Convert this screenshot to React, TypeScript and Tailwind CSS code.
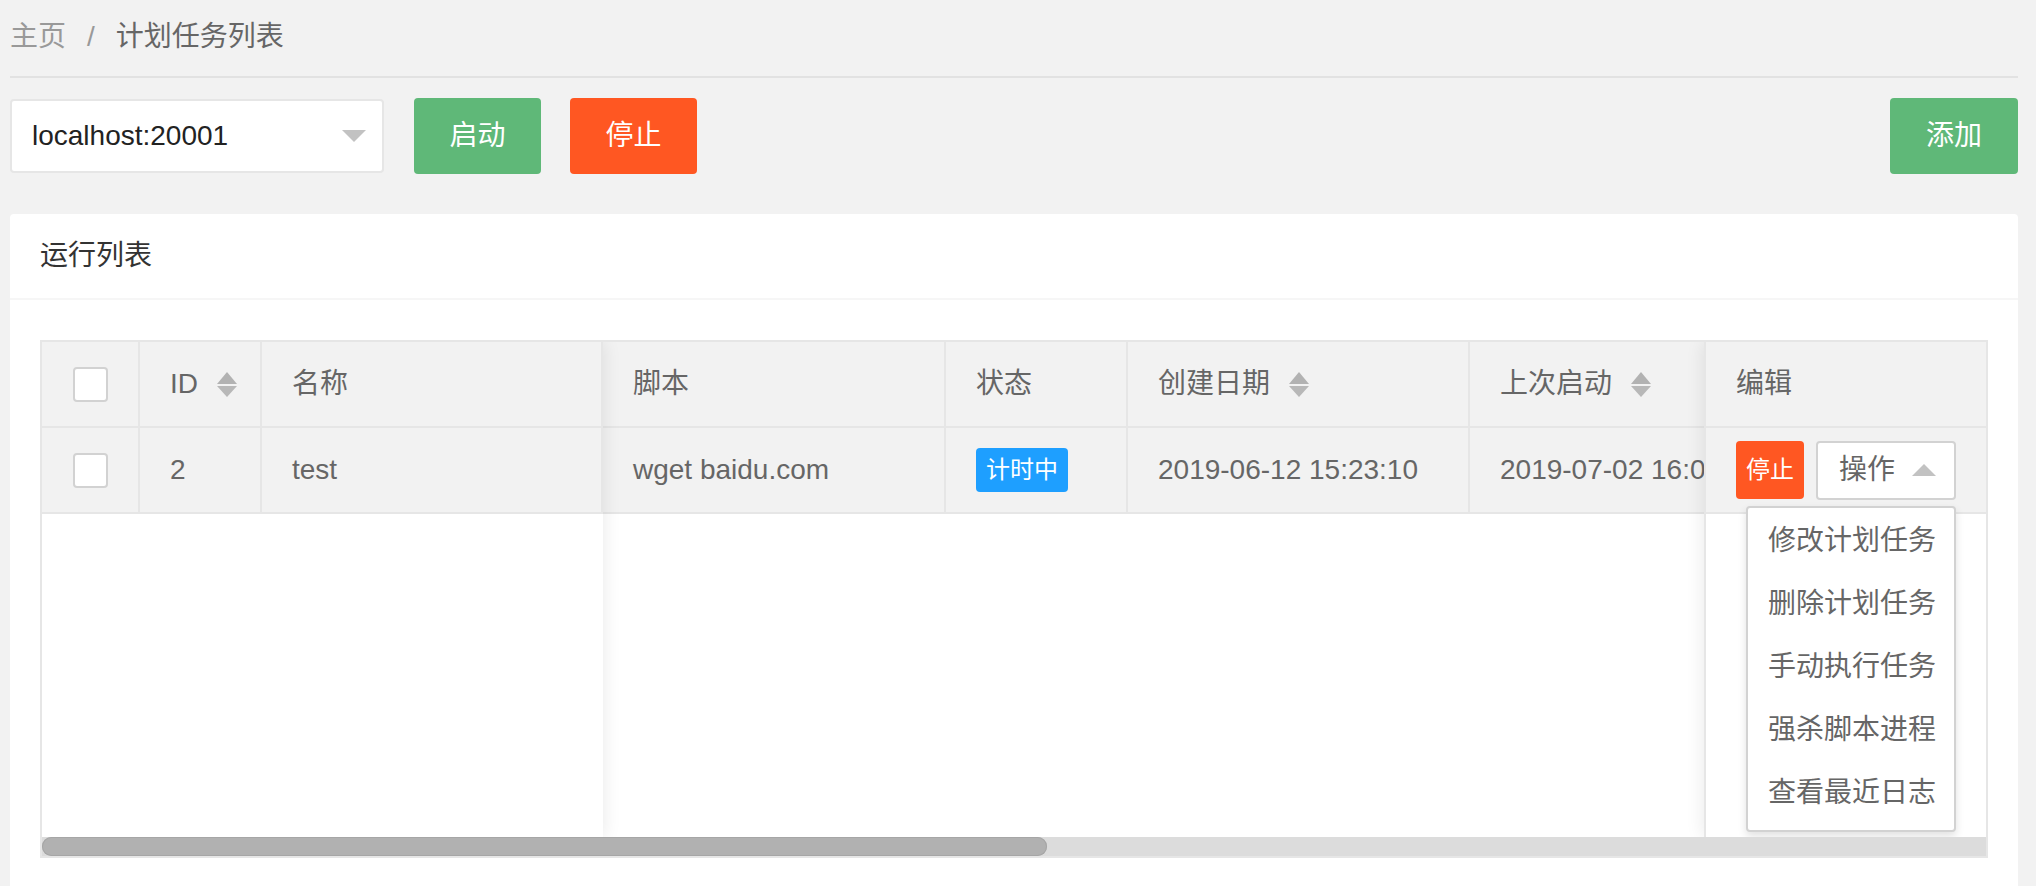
import { ReactNode } from "react";

// triangulos de ordenacao do cabecalho
const SortIcon = () => (
  <span className="ml-[19px] flex flex-col items-center gap-[2px]">
    <span className="h-0 w-0 border-x-[10px] border-b-[12px] border-x-transparent border-b-[#b2b2b2]" />
    <span className="h-0 w-0 border-x-[10px] border-t-[11px] border-x-transparent border-t-[#b8b8b8]" />
  </span>
);

const CheckBox = () => (
  <span className="block h-[35px] w-[35px] rounded-[4px] border-2 border-[#d2d2d2] bg-white" />
);

type CellProps = {
  w: string;
  children?: ReactNode;
  center?: boolean;
};

const Cell = ({ w, children, center }: CellProps) => (
  <div
    className={`flex h-full shrink-0 items-center border-r-2 border-[#e6e6e6] ${w} ${
      center ? "justify-center" : "px-[30px]"
    }`}
  >
    {children}
  </div>
);

const menu = ["修改计划任务", "删除计划任务", "手动执行任务", "强杀脚本进程", "查看最近日志"];

export default function App() {
  return (
    <div className="h-screen overflow-hidden bg-[#f2f2f2] pl-[10px] pr-[18px] font-['Liberation_Sans','Noto_Sans_CJK_SC',sans-serif] text-[28px]">
      {/* breadcrumb */}
      <div className="flex h-[76px] items-center pb-[3px]">
        <span className="text-[#999]">主页</span>
        <span className="mx-[21px] text-[#999]">/</span>
        <span className="text-[#666]">计划任务列表</span>
      </div>
      <div className="h-[2px] bg-[#e2e2e2]" />

      {/* toolbar */}
      <div className="mt-[20px] flex h-[76px] items-center">
        <div className="flex h-[74px] w-[374px] items-center justify-between rounded-[4px] border-2 border-[#e6e6e6] bg-white pl-[20px] pr-[16px] text-[#222]">
          <span>localhost:20001</span>
          <span className="h-0 w-0 border-x-[12px] border-t-[12px] border-x-transparent border-t-[#c2c2c2]" />
        </div>
        <button className="ml-[30px] h-[76px] w-[127px] rounded-[4px] bg-[#5FB878] text-white">启动</button>
        <button className="ml-[29px] h-[76px] w-[127px] rounded-[4px] bg-[#FF5722] text-white">停止</button>
        <button className="ml-auto h-[76px] w-[128px] rounded-[4px] bg-[#5FB878] text-white">添加</button>
      </div>

      {/* card */}
      <div className="mt-[40px] rounded-[4px] bg-white">
        <div className="flex h-[86px] items-center border-b-2 border-[#f6f6f6] px-[30px] text-[#333]">运行列表</div>
        <div className="px-[30px] pb-[40px] pt-[40px]">
          <div className="border-2 border-[#e6e6e6] text-[#666]">
            <div className="flex h-[495px] overflow-hidden">
              {/* colunas fixas a esquerda */}
              <div className="relative z-10 flex w-[561px] shrink-0 flex-col bg-white shadow-[2px_0_16px_rgba(0,0,0,0.08)]">
                <div className="flex h-[86px] border-b-2 border-[#e6e6e6] bg-[#f2f2f2]">
                  <Cell w="w-[98px]" center>
                    <CheckBox />
                  </Cell>
                  <Cell w="w-[122px]">
                    ID
                    <SortIcon />
                  </Cell>
                  <Cell w="w-[341px]">名称</Cell>
                </div>
                <div className="flex h-[86px] border-b-2 border-[#e6e6e6] bg-[#f2f2f2]">
                  <Cell w="w-[98px]" center>
                    <CheckBox />
                  </Cell>
                  <Cell w="w-[122px]">2</Cell>
                  <Cell w="w-[341px]">test</Cell>
                </div>
              </div>

              {/* area rolavel */}
              <div className="flex min-w-0 flex-1 flex-col overflow-hidden bg-white">
                <div className="flex h-[86px] w-max border-b-2 border-[#e6e6e6] bg-[#f2f2f2]">
                  <Cell w="w-[343px]">脚本</Cell>
                  <Cell w="w-[182px]">状态</Cell>
                  <Cell w="w-[342px]">
                    创建日期
                    <SortIcon />
                  </Cell>
                  <Cell w="w-[342px]">
                    上次启动
                    <SortIcon />
                  </Cell>
                </div>
                <div className="flex h-[86px] w-max border-b-2 border-[#e6e6e6] bg-[#f2f2f2]">
                  <Cell w="w-[343px]">wget baidu.com</Cell>
                  <Cell w="w-[182px]">
                    <span className="flex h-[44px] items-center rounded-[4px] bg-[#1E9FFF] px-[10px] text-[24px] text-white">
                      计时中
                    </span>
                  </Cell>
                  <Cell w="w-[342px]">2019-06-12 15:23:10</Cell>
                  <Cell w="w-[342px]">2019-07-02 16:00:00</Cell>
                </div>
              </div>

              {/* coluna fixa a direita */}
              <div className="relative z-10 flex w-[282px] shrink-0 flex-col border-l-2 border-[#e6e6e6] bg-white shadow-[-2px_0_16px_rgba(0,0,0,0.08)]">
                <div className="flex h-[86px] items-center border-b-2 border-[#e6e6e6] bg-[#f2f2f2] px-[30px]">编辑</div>
                <div className="flex h-[86px] items-center border-b-2 border-[#e6e6e6] bg-[#f2f2f2] px-[30px]">
                  <button className="h-[58px] w-[68px] rounded-[4px] bg-[#FF5722] text-[24px] text-white">停止</button>
                  <div className="relative ml-[12px]">
                    <div className="flex h-[59px] w-[140px] items-center justify-between rounded-[4px] border-2 border-[#d2d2d2] bg-white pl-[21px] pr-[18px]">
                      <span>操作</span>
                      <span className="h-0 w-0 border-x-[12px] border-b-[12px] border-x-transparent border-b-[#c2c2c2]" />
                    </div>
                    <div className="absolute right-0 top-[calc(100%+6px)] z-20 w-[210px] rounded-[4px] border-2 border-[#d2d2d2] bg-white pb-[5px] pt-[2px] shadow-[0_4px_8px_rgba(0,0,0,0.12)]">
                      {menu.map((m) => (
                        <div key={m} className="flex h-[63px] items-center pl-[20px] text-[#666]">
                          {m}
                        </div>
                      ))}
                    </div>
                  </div>
                </div>
              </div>
            </div>

            {/* barra de rolagem */}
            <div className="flex h-[19px] bg-[#dcdcdc]">
              <div className="h-full w-[1005px] rounded-full bg-[#b1b1b1] shadow-[inset_0_0_0_1px_#a6a6a6]" />
            </div>
          </div>
        </div>
      </div>
    </div>
  );
}
